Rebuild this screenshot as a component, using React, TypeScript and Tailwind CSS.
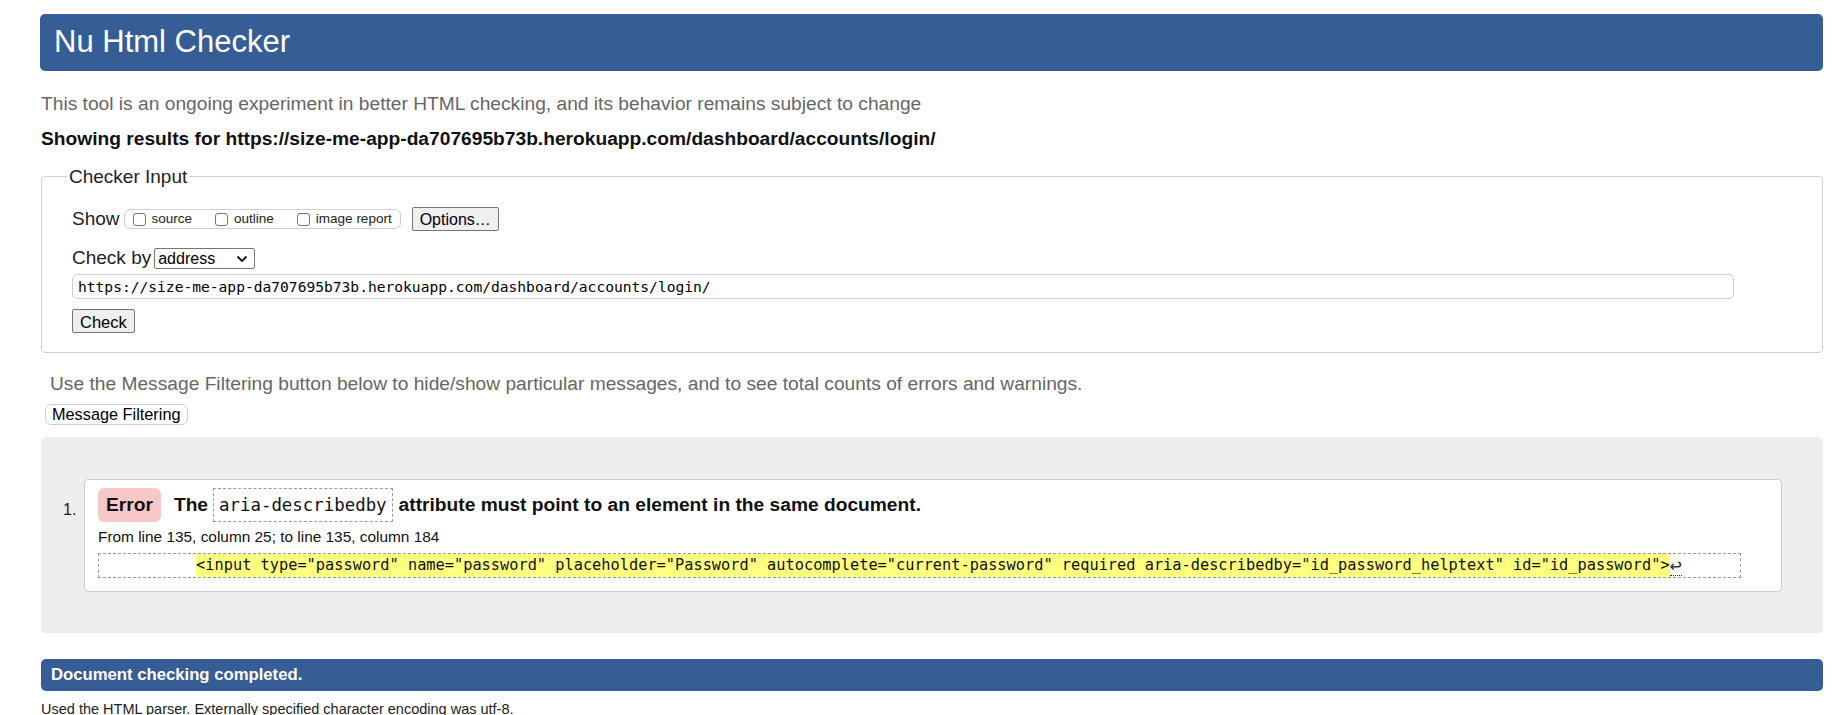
import { Fragment } from "react";

const sans = "font-['Liberation_Sans',Arial,sans-serif]";
const mono = "font-['DejaVu_Sans_Mono',monospace]";

const codeLine =
  '<input type="password" name="password" placeholder="Password" autocomplete="current-password" required aria-describedby="id_password_helptext" id="id_password">';

const Checkbox = ({ label }: { label: string }) => (
  <span className="inline-flex items-center gap-[6px] mr-[23px] last:mr-0">
    <span className="inline-block size-[13px] rounded-[3px] border border-[#767676] bg-white" />
    <span className="text-[13.5px] text-[#222]">{label}</span>
  </span>
);

export default function App() {
  return (
    <div className={`${sans} min-h-[715px] bg-white pl-[40px] pr-[22px] text-[#222] overflow-hidden`}>
      {/* Title bar */}
      <div className="pt-[14px]">
        <div className="flex h-[57px] items-center rounded-[5px] bg-[#365d95] px-[14px]">
          <h1 className="text-[31px] text-white">Nu Html Checker</h1>
        </div>
      </div>

      <p className="mt-[22px] pl-[1px] text-[19.2px] leading-[21px] text-[#666]">
        This tool is an ongoing experiment in better HTML checking, and its behavior remains subject to change
      </p>
      <p className="mt-[14px] pl-[1px] text-[19.2px] font-bold leading-[21px] text-[#111]">
        Showing results for https://size-me-app-da707695b73b.herokuapp.com/dashboard/accounts/login/
      </p>

      {/* Checker input */}
      <fieldset className="mt-[17px] ml-[1px] rounded-[4px] border border-[#cfcfcf] pb-[17px]">
        <legend className="ml-[25px] px-[2px] text-[19px] leading-[21px]">Checker Input</legend>
        <div className="pl-[30px]">
          <div className="mt-[20px] flex h-[24px] items-center">
            <span className="text-[19px]">Show</span>
            <span className="ml-[4px] flex h-[20px] items-center rounded-[6px] border border-[#cfcfcf] px-[8px]">
              <Checkbox label="source" />
              <Checkbox label="outline" />
              <Checkbox label="image report" />
            </span>
            <button className="ml-[11px] h-[24px] rounded-[2px] border border-[#767676] bg-[#efefef] px-[7px] text-[16px] text-black">
              Options…
            </button>
          </div>
          <div className="mt-[17px] flex h-[21px] items-center">
            <span className="text-[19px]">Check by</span>
            <span className="ml-[3px] flex h-[21px] w-[101px] items-center justify-between rounded-[2px] border border-[#767676] bg-white pl-[3px] pr-[6px] text-[16px] text-black">
              address
              <svg width="12" height="8" viewBox="0 0 12 8" fill="none">
                <path d="M1.5 1.5 6 6l4.5-4.5" stroke="#111" strokeWidth="1.8" />
              </svg>
            </span>
          </div>
          <div className={`${mono} mt-[5px] flex h-[25px] w-[1662px] items-center rounded-[5px] border border-[#cfcfcf] px-[5px] text-[14.6px] text-black`}>
            https://size-me-app-da707695b73b.herokuapp.com/dashboard/accounts/login/
          </div>
          <button className="mt-[10px] h-[24px] rounded-[2px] border border-[#767676] bg-[#efefef] px-[7px] text-[16.5px] text-black">
            Check
          </button>
        </div>
      </fieldset>

      <p className="mt-[20px] ml-[10px] text-[19.2px] leading-[21px] text-[#666]">
        Use the Message Filtering button below to hide/show particular messages, and to see total counts of errors and warnings.
      </p>
      <button className="mt-[10px] ml-[5px] h-[21px] rounded-[6px] border border-[#cfcfcf] bg-white px-[6px] text-[16.3px] leading-[19px] text-black">
        Message Filtering
      </button>

      {/* Results */}
      <div className="mt-[10px] ml-[1px] rounded-[5px] bg-[#eeeeee] pb-[41px] pl-[43px] pr-[41px] pt-[42px]">
        <ol className="list-none">
          {[1].map((n) => (
            <Fragment key={n}>
              <li className="relative rounded-[4px] border border-[#cccccc] bg-white pb-[13px] pl-[13px] pr-[40px] pt-[9px]">
                <span className="absolute -left-[22px] top-[18px] text-[16px] text-[#222]">{n}.</span>
                <div className="flex h-[32px] items-center text-[19.2px] font-bold text-[#111]">
                  <span className="rounded-[6px] bg-[#f8c8c8] px-[8px] py-[3px]">Error</span>
                  <span className="ml-[13px]">The</span>
                  <code className={`${mono} ml-[5px] border border-dashed border-[#999] px-[5px] py-[3px] text-[17.4px] font-normal text-[#111]`}>
                    aria-describedby
                  </code>
                  <span className="ml-[6px]">attribute must point to an element in the same document.</span>
                </div>
                <p className="mt-[6px] text-[15.4px] leading-[20px] text-[#111]">
                  From line 135, column 25; to line 135, column 184
                </p>
                <div className={`${mono} mt-[6px] flex h-[25px] items-center whitespace-pre border border-dashed border-[#999] text-[15.3px] text-[#111]`}>
                  <span className="pl-[5px]">{"          "}</span>
                  <span className="bg-[#ffff80]">{codeLine}</span>
                  <span className="border-b border-dotted border-[#333] text-[20px] leading-[19px] text-[#333]">↩</span>
                </div>
              </li>
            </Fragment>
          ))}
        </ol>
      </div>

      <div className="mt-[26px] ml-[1px] flex h-[32px] items-center rounded-[5px] bg-[#365d95] px-[10px]">
        <span className="text-[16.7px] font-bold text-white">Document checking completed.</span>
      </div>
      <p className="mt-[10px] ml-[1px] text-[14.5px] leading-[16px] text-[#222]">
        Used the HTML parser. Externally specified character encoding was utf-8.
      </p>
    </div>
  );
}
